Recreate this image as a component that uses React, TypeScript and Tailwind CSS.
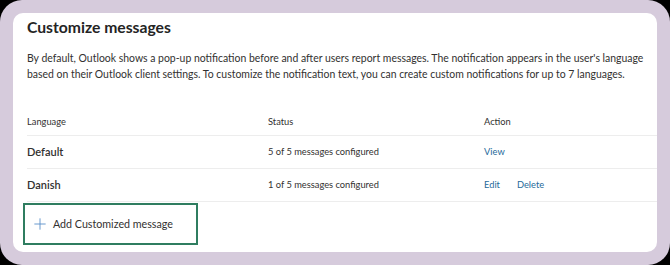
import { Plus } from 'lucide-react';

const rows = [
  { language: 'Default', status: '5 of 5 messages configured', actions: ['View'] },
  { language: 'Danish', status: '1 of 5 messages configured', actions: ['Edit', 'Delete'] },
];

export default function App() {
  return (
    <div className="w-[670px] h-[265px] bg-black overflow-hidden">
      <div
        className="w-full h-full bg-[#d6cbdc] rounded-[22px] p-[13px]"
        style={{ fontFamily: 'Lato, "Open Sans", sans-serif' }}
      >
        <div className="h-[239px] w-[644px] bg-white rounded-[10px] pl-[14px] pt-[2px] text-[#242424] overflow-hidden">
          <h1 className="text-[15.7px] font-bold leading-[24px]">Customize messages</h1>

          <p className="mt-[11px] text-[10.45px] leading-[16px] text-[#323130] whitespace-nowrap">
            By default, Outlook shows a pop-up notification before and after users report messages. The notification appears in the user's language
            <br />
            based on their Outlook client settings. To customize the notification text, you can create custom notifications for up to 7 languages.
          </p>

          {/* Table */}
          <div className="mt-[27px] text-[#323130]">
            <div className="flex items-center h-[27px] border-b border-[#ededed] text-[9.3px]">
              <div className="w-[241px]">Language</div>
              <div className="w-[216px]">Status</div>
              <div>Action</div>
            </div>
            {rows.map((r) => (
              <div key={r.language} className="flex items-center h-[33px] border-b border-[#ededed]">
                <div className="w-[241px] text-[11px] font-semibold text-[#323130]">{r.language}</div>
                <div className="w-[216px] text-[9.3px]">{r.status}</div>
                <div className="flex gap-[17px] text-[9.3px] text-[#1f6a9a]">
                  {r.actions.map((a) => (
                    <span key={a}>{a}</span>
                  ))}
                </div>
              </div>
            ))}
          </div>

          <div className="-ml-[4px] mt-[1px] w-[175px] h-[42px] border-2 border-[#2f7d60] flex items-center pl-[6px] gap-[4px] whitespace-nowrap">
            <Plus className="w-[18px] h-[18px] text-[#5a8fc8]" strokeWidth={1.2} />
            <span className="text-[10.7px] text-[#323130]">Add Customized message</span>
          </div>
        </div>
      </div>
    </div>
  );
}
